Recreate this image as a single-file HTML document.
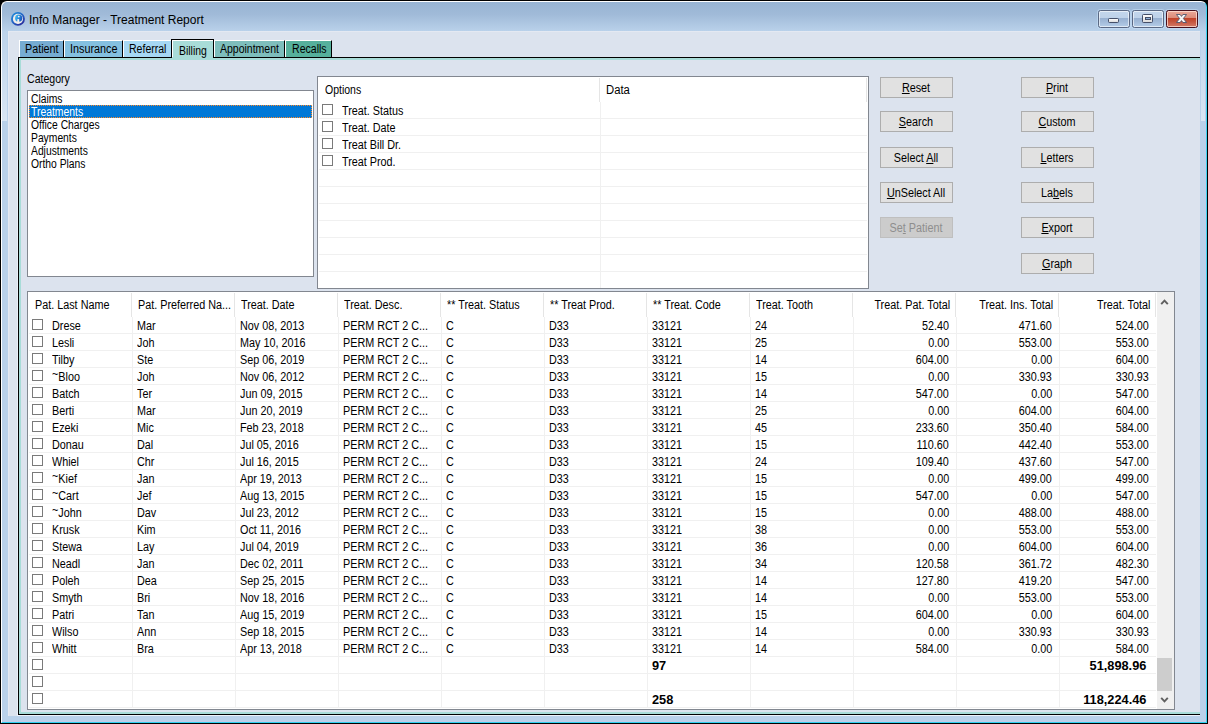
<!DOCTYPE html>
<html><head><meta charset="utf-8"><title>Info Manager - Treatment Report</title>
<style>
html,body{margin:0;padding:0}
body{width:1208px;height:724px;background:#000;overflow:hidden;position:relative;
 font-family:"Liberation Sans",sans-serif;font-size:12px;line-height:13px;color:#000}
div,span,svg{position:absolute;box-sizing:border-box}
.t{white-space:nowrap;transform:scaleX(0.9);transform-origin:0 50%}
.tr{transform-origin:100% 50%}
.tc{transform-origin:50% 50%;text-align:center}
.b{font-weight:bold}
i{font-style:normal;position:relative;top:-3px}
u{text-decoration:underline;text-decoration-thickness:1px;text-underline-offset:1px}
.btn{background:#e1e1e1;border:1px solid #adadad}
.cb{width:11px;height:11px;background:#fff;border:1px solid #7a7a7a}
.hl{background:#f0f0f0;height:1px}
.vl{background:#f0f0f0;width:1px}
.hs{background:#e5e5e5;width:1px}
</style></head><body>

<div id="frame" style="left:1px;top:1px;width:1206px;height:722px;border-radius:6px 6px 0 0;border-left:1px solid #fff;border-top:1px solid #fff;border-right:1px solid #3ed4f2;border-bottom:1px solid #2fd0f0;background:linear-gradient(#98b4d4 0px,#a0bad8 12px,#b9d1ea 29px,#b9d1ea 100%)"></div>
<div style="left:2px;top:31px;width:5px;height:90px;background:linear-gradient(rgba(255,255,255,.04),rgba(255,255,255,.46))"></div>
<div style="left:1201px;top:31px;width:5px;height:90px;background:linear-gradient(rgba(255,255,255,.04),rgba(255,255,255,.46))"></div>
<div style="left:1205px;top:31px;width:1px;height:691px;background:#c2cbe7"></div>
<div style="left:2px;top:721px;width:1204px;height:1px;background:#c2cbe7"></div>
<svg style="left:10px;top:11px" width="16" height="16" viewBox="0 0 16 16">
<defs>
<linearGradient id="g1" x1="0" y1="0" x2="1" y2="0.3"><stop offset="0" stop-color="#58c2f4"/><stop offset="0.5" stop-color="#2a96e0"/><stop offset="1" stop-color="#1c5cc0"/></linearGradient>
<linearGradient id="g2" x1="0.1" y1="0" x2="0.9" y2="1"><stop offset="0" stop-color="#1c90dc"/><stop offset="0.5" stop-color="#2461c4"/><stop offset="1" stop-color="#2a1f94"/></linearGradient>
</defs>
<circle cx="7.95" cy="7.9" r="6.95" fill="url(#g2)"/>
<circle cx="7.95" cy="7.9" r="5.05" fill="#f1ede9"/>
<circle cx="8.65" cy="7.2" r="3.6" fill="url(#g1)"/>
<circle cx="8.75" cy="5.6" r="0.95" fill="#f6f1ee"/>
<rect x="7.3" y="8.1" width="1.9" height="4.4" rx="0.6" fill="#f4efec"/>
</svg>
<span class="t" id="ttl" style="left:29px;top:13px;line-height:14px;transform:scaleX(1);color:#000">Info Manager - Treatment Report</span>
<div style="left:1098px;top:10px;width:32px;height:18px;border:1px solid #5a6883;border-radius:2.5px;background:linear-gradient(#c3d6ec 0,#bed2e9 45%,#98b1d1 46%,#a3bcda 70%,#b5cde8 100%);box-shadow:inset 0 0 0 1px rgba(255,255,255,.58),0 0 0 1px rgba(200,225,250,.55)"></div>
<div style="left:1132px;top:10px;width:32px;height:18px;border:1px solid #5a6883;border-radius:2.5px;background:linear-gradient(#c3d6ec 0,#bed2e9 45%,#98b1d1 46%,#a3bcda 70%,#b5cde8 100%);box-shadow:inset 0 0 0 1px rgba(255,255,255,.58),0 0 0 1px rgba(200,225,250,.55)"></div>
<div style="left:1166px;top:10px;width:32px;height:18px;border:1px solid #47101d;border-radius:2.5px;background:linear-gradient(#eaa898 0,#dc8a78 45%,#c2432a 46%,#c4533c 65%,#d37b69 100%);box-shadow:inset 0 0 0 1px rgba(255,225,215,.75),0 0 0 1px rgba(200,225,250,.55)"></div>
<div style="left:1108px;top:18px;width:11px;height:5px;background:linear-gradient(#fcfcfc,#dcdcdc);border:1px solid #454f68;border-radius:1.5px"></div>
<div style="left:1142px;top:14px;width:11px;height:9px;background:linear-gradient(#fcfcfc,#dcdcdc);border:1px solid #454f68;border-radius:1.5px"></div>
<div style="left:1145px;top:17px;width:6px;height:3px;background:#8fb0d8;border:1px solid #454f68"></div>
<svg style="left:1174px;top:12px" width="16" height="14" viewBox="0 0 16 14">
<path d="M2.5 2.5H6.1L7.5 4.4 8.9 2.5H12.5L9.4 6.5 12.5 10.5H8.9L7.5 8.6 6.1 10.5H2.5L5.6 6.5Z" fill="#f8f6f5" stroke="#46506a" stroke-width="0.85" stroke-linejoin="round"/>
</svg>
<div id="client" style="left:8px;top:31px;width:1192px;height:685px;background:#dce3ee;overflow:hidden;border-top:1px solid #e4e9f2;border-left:1px solid #e4e9f2"></div>
<div style="left:17px;top:57px;width:1183px;height:659px;border-left:1px solid #eaeff9;border-bottom:1px solid #eef2fa"></div>
<div style="left:18px;top:57px;width:1182px;height:658px;border:1px solid #000;border-right:none"></div>
<div style="left:19px;top:58px;width:1181px;height:656px;border:2px solid #a8dcd8;border-right:none"></div>
<div style="left:19px;top:40px;width:45px;height:17px;background:#76acd2;border-left:1px solid #fff;border-top:1px solid #fff;border-right:1px solid #000"></div>
<div style="left:64px;top:40px;width:59px;height:17px;background:#84c0e0;border-left:1px solid #fff;border-top:1px solid #fff;border-right:1px solid #000"></div>
<div style="left:123px;top:40px;width:51px;height:17px;background:#a6d8f4;border-left:1px solid #fff;border-top:1px solid #fff;border-right:1px solid #000"></div>
<div style="left:214px;top:40px;width:71px;height:17px;background:#7ebebc;border-left:1px solid #fff;border-top:1px solid #fff;border-right:1px solid #000"></div>
<div style="left:285px;top:40px;width:47px;height:17px;background:#56b09c;border-left:1px solid #fff;border-top:1px solid #fff;border-right:1px solid #000"></div>
<div style="left:171px;top:39px;width:43px;height:19px;background:#a8dcd8;border:1px solid #000;border-bottom:none;box-shadow:inset 1px 1px 0 #fff"></div>
<div style="left:172px;top:57px;width:41px;height:3px;background:#a8dcd8"></div>
<span class="t" style="top:43px;left:25px;">Patient</span>
<span class="t" style="top:43px;left:70px;">Insurance</span>
<span class="t" style="top:43px;transform:scaleX(0.877);left:129px;">Referral</span>
<span class="t" style="top:45px;transform:scaleX(0.87);left:179px;">Billing</span>
<span class="t" style="top:43px;transform:scaleX(0.875);left:220px;">Appointment</span>
<span class="t" style="top:43px;transform:scaleX(0.88);left:292px;">Recalls</span>
<span class="t" style="top:73px;transform:scaleX(0.88);left:27px;">Category</span>
<div style="left:27px;top:90px;width:287px;height:187px;background:#fff;border:1px solid #828790"></div>
<span class="t" style="top:93px;transform:scaleX(0.86);left:31px;">Claims</span>
<div style="left:29px;top:105px;width:283px;height:13px;background:#0078d7;outline:1px dotted #ff8a28;outline-offset:-1px"></div>
<span class="t" style="top:106px;transform:scaleX(0.865);color:#fff;left:31px;">Treatments</span>
<span class="t" style="top:119px;transform:scaleX(0.86);left:31px;">Office Charges</span>
<span class="t" style="top:132px;transform:scaleX(0.86);left:31px;">Payments</span>
<span class="t" style="top:145px;transform:scaleX(0.86);left:31px;">Adjustments</span>
<span class="t" style="top:158px;transform:scaleX(0.86);left:31px;">Ortho Plans</span>
<div style="left:317px;top:76px;width:552px;height:213px;background:#fff;border:1px solid #828790"></div>
<span class="t" style="top:84px;transform:scaleX(0.875);left:325px;">Options</span>
<span class="t" style="top:84px;transform:scaleX(0.94);left:606px;">Data</span>
<div class="hs" style="left:599px;top:78px;height:24px"></div>
<div class="hs" style="left:866px;top:78px;height:24px"></div>
<div class="vl" style="left:600px;top:102px;height:186px"></div>
<div class="hl" style="left:319px;top:118px;width:548px"></div>
<div class="hl" style="left:319px;top:135px;width:548px"></div>
<div class="hl" style="left:319px;top:152px;width:548px"></div>
<div class="hl" style="left:319px;top:169px;width:548px"></div>
<div class="hl" style="left:319px;top:186px;width:548px"></div>
<div class="hl" style="left:319px;top:203px;width:548px"></div>
<div class="hl" style="left:319px;top:220px;width:548px"></div>
<div class="hl" style="left:319px;top:237px;width:548px"></div>
<div class="hl" style="left:319px;top:254px;width:548px"></div>
<div class="hl" style="left:319px;top:271px;width:548px"></div>
<div class="cb" style="left:322px;top:104px"></div>
<span class="t" style="top:105px;left:342px;">Treat. Status</span>
<div class="cb" style="left:322px;top:121px"></div>
<span class="t" style="top:122px;left:342px;">Treat. Date</span>
<div class="cb" style="left:322px;top:138px"></div>
<span class="t" style="top:139px;left:342px;">Treat Bill Dr.</span>
<div class="cb" style="left:322px;top:155px"></div>
<span class="t" style="top:156px;left:342px;">Treat Prod.</span>
<div class="btn" style="left:880px;top:77px;width:73px;height:21px"></div>
<span class="t tc" style="top:82px;left:765.5px;width:300px;"><u>R</u>eset</span>
<div class="btn" style="left:880px;top:111px;width:73px;height:21px"></div>
<span class="t tc" style="top:116px;left:765.5px;width:300px;"><u>S</u>earch</span>
<div class="btn" style="left:880px;top:147px;width:73px;height:21px"></div>
<span class="t tc" style="top:152px;left:765.5px;width:300px;">Select <u>A</u>ll</span>
<div class="btn" style="left:880px;top:182px;width:73px;height:21px"></div>
<span class="t tc" style="top:187px;left:765.5px;width:300px;"><u>U</u>nSelect All</span>
<div class="btn" style="left:880px;top:217px;width:73px;height:21px;background:#cccccc;border-color:#bfbfbf"></div>
<span class="t tc" style="top:222px;color:#8e8e8e;left:765.5px;width:300px;">Se<u>t</u> Patient</span>
<div class="btn" style="left:1021px;top:77px;width:73px;height:21px"></div>
<span class="t tc" style="top:82px;left:906.5px;width:300px;"><u>P</u>rint</span>
<div class="btn" style="left:1021px;top:111px;width:73px;height:21px"></div>
<span class="t tc" style="top:116px;left:906.5px;width:300px;"><u>C</u>ustom</span>
<div class="btn" style="left:1021px;top:147px;width:73px;height:21px"></div>
<span class="t tc" style="top:152px;left:906.5px;width:300px;"><u>L</u>etters</span>
<div class="btn" style="left:1021px;top:182px;width:73px;height:21px"></div>
<span class="t tc" style="top:187px;left:906.5px;width:300px;">La<u>b</u>els</span>
<div class="btn" style="left:1021px;top:217px;width:73px;height:21px"></div>
<span class="t tc" style="top:222px;left:906.5px;width:300px;"><u>E</u>xport</span>
<div class="btn" style="left:1021px;top:253px;width:73px;height:21px"></div>
<span class="t tc" style="top:258px;left:906.5px;width:300px;"><u>G</u>raph</span>
<div style="left:27px;top:291px;width:1148px;height:419px;background:#fff;border:1px solid #828790"></div>
<div style="left:1157px;top:292px;width:17px;height:417px;background:#f0f0f0"></div>
<div style="left:1157px;top:658px;width:15px;height:33px;background:#cdcdcd"></div>
<svg style="left:1160px;top:298px" width="9" height="8" viewBox="0 0 9 8"><path d="M1.2 6.2L4.5 2.6 7.8 6.2" fill="none" stroke="#606060" stroke-width="1.9"/></svg>
<svg style="left:1160px;top:696px" width="9" height="8" viewBox="0 0 9 8"><path d="M1.2 1.8L4.5 5.4 7.8 1.8" fill="none" stroke="#606060" stroke-width="1.9"/></svg>
<div class="hs" style="left:131px;top:293px;height:24px"></div>
<div class="vl" style="left:132px;top:317px;height:391px"></div>
<div class="hs" style="left:234px;top:293px;height:24px"></div>
<div class="vl" style="left:235px;top:317px;height:391px"></div>
<div class="hs" style="left:337px;top:293px;height:24px"></div>
<div class="vl" style="left:338px;top:317px;height:391px"></div>
<div class="hs" style="left:440px;top:293px;height:24px"></div>
<div class="vl" style="left:441px;top:317px;height:391px"></div>
<div class="hs" style="left:543px;top:293px;height:24px"></div>
<div class="vl" style="left:544px;top:317px;height:391px"></div>
<div class="hs" style="left:646px;top:293px;height:24px"></div>
<div class="vl" style="left:647px;top:317px;height:391px"></div>
<div class="hs" style="left:749px;top:293px;height:24px"></div>
<div class="vl" style="left:750px;top:317px;height:391px"></div>
<div class="hs" style="left:852px;top:293px;height:24px"></div>
<div class="vl" style="left:853px;top:317px;height:391px"></div>
<div class="hs" style="left:955px;top:293px;height:24px"></div>
<div class="vl" style="left:956px;top:317px;height:391px"></div>
<div class="hs" style="left:1058px;top:293px;height:24px"></div>
<div class="vl" style="left:1059px;top:317px;height:391px"></div>
<div class="hs" style="left:1155px;top:293px;height:24px"></div>
<div class="hl" style="left:29px;top:333px;width:1127px"></div>
<div class="hl" style="left:29px;top:350px;width:1127px"></div>
<div class="hl" style="left:29px;top:367px;width:1127px"></div>
<div class="hl" style="left:29px;top:384px;width:1127px"></div>
<div class="hl" style="left:29px;top:401px;width:1127px"></div>
<div class="hl" style="left:29px;top:418px;width:1127px"></div>
<div class="hl" style="left:29px;top:435px;width:1127px"></div>
<div class="hl" style="left:29px;top:452px;width:1127px"></div>
<div class="hl" style="left:29px;top:469px;width:1127px"></div>
<div class="hl" style="left:29px;top:486px;width:1127px"></div>
<div class="hl" style="left:29px;top:503px;width:1127px"></div>
<div class="hl" style="left:29px;top:520px;width:1127px"></div>
<div class="hl" style="left:29px;top:537px;width:1127px"></div>
<div class="hl" style="left:29px;top:554px;width:1127px"></div>
<div class="hl" style="left:29px;top:571px;width:1127px"></div>
<div class="hl" style="left:29px;top:588px;width:1127px"></div>
<div class="hl" style="left:29px;top:605px;width:1127px"></div>
<div class="hl" style="left:29px;top:622px;width:1127px"></div>
<div class="hl" style="left:29px;top:639px;width:1127px"></div>
<div class="hl" style="left:29px;top:656px;width:1127px"></div>
<div class="hl" style="left:29px;top:673px;width:1127px"></div>
<div class="hl" style="left:29px;top:690px;width:1127px"></div>
<div class="hl" style="left:29px;top:707px;width:1127px"></div>
<span class="t" style="top:299px;left:35px;">Pat. Last Name</span>
<span class="t" style="top:299px;left:138px;">Pat. Preferred Na...</span>
<span class="t" style="top:299px;left:241px;">Treat. Date</span>
<span class="t" style="top:299px;left:344px;">Treat. Desc.</span>
<span class="t" style="top:299px;left:447px;">** Treat. Status</span>
<span class="t" style="top:299px;left:550px;">** Treat Prod.</span>
<span class="t" style="top:299px;left:653px;">** Treat. Code</span>
<span class="t" style="top:299px;left:756px;">Treat. Tooth</span>
<span class="t tr" style="top:299px;right:258px;">Treat. Pat. Total</span>
<span class="t tr" style="top:299px;right:155px;">Treat. Ins. Total</span>
<span class="t tr" style="top:299px;right:58px;">Treat. Total</span>
<div class="cb" style="left:32px;top:319px"></div>
<span class="t" style="top:320px;left:52px;">Drese</span>
<span class="t" style="top:320px;left:137px;">Mar</span>
<span class="t" style="top:320px;left:240px;">Nov 08, 2013</span>
<span class="t" style="top:320px;left:343px;">PERM RCT 2 C...</span>
<span class="t" style="top:320px;left:446px;">C</span>
<span class="t" style="top:320px;left:549px;">D33</span>
<span class="t" style="top:320px;left:652px;">33121</span>
<span class="t" style="top:320px;left:755px;">24</span>
<span class="t tr" style="top:320px;right:259px;">52.40</span>
<span class="t tr" style="top:320px;right:156px;">471.60</span>
<span class="t tr" style="top:320px;right:59px;">524.00</span>
<div class="cb" style="left:32px;top:336px"></div>
<span class="t" style="top:337px;left:52px;">Lesli</span>
<span class="t" style="top:337px;left:137px;">Joh</span>
<span class="t" style="top:337px;left:240px;">May 10, 2016</span>
<span class="t" style="top:337px;left:343px;">PERM RCT 2 C...</span>
<span class="t" style="top:337px;left:446px;">C</span>
<span class="t" style="top:337px;left:549px;">D33</span>
<span class="t" style="top:337px;left:652px;">33121</span>
<span class="t" style="top:337px;left:755px;">25</span>
<span class="t tr" style="top:337px;right:259px;">0.00</span>
<span class="t tr" style="top:337px;right:156px;">553.00</span>
<span class="t tr" style="top:337px;right:59px;">553.00</span>
<div class="cb" style="left:32px;top:353px"></div>
<span class="t" style="top:354px;left:52px;">Tilby</span>
<span class="t" style="top:354px;left:137px;">Ste</span>
<span class="t" style="top:354px;left:240px;">Sep 06, 2019</span>
<span class="t" style="top:354px;left:343px;">PERM RCT 2 C...</span>
<span class="t" style="top:354px;left:446px;">C</span>
<span class="t" style="top:354px;left:549px;">D33</span>
<span class="t" style="top:354px;left:652px;">33121</span>
<span class="t" style="top:354px;left:755px;">14</span>
<span class="t tr" style="top:354px;right:259px;">604.00</span>
<span class="t tr" style="top:354px;right:156px;">0.00</span>
<span class="t tr" style="top:354px;right:59px;">604.00</span>
<div class="cb" style="left:32px;top:370px"></div>
<span class="t" style="top:371px;left:52px;"><i>~</i>Bloo</span>
<span class="t" style="top:371px;left:137px;">Joh</span>
<span class="t" style="top:371px;left:240px;">Nov 06, 2012</span>
<span class="t" style="top:371px;left:343px;">PERM RCT 2 C...</span>
<span class="t" style="top:371px;left:446px;">C</span>
<span class="t" style="top:371px;left:549px;">D33</span>
<span class="t" style="top:371px;left:652px;">33121</span>
<span class="t" style="top:371px;left:755px;">15</span>
<span class="t tr" style="top:371px;right:259px;">0.00</span>
<span class="t tr" style="top:371px;right:156px;">330.93</span>
<span class="t tr" style="top:371px;right:59px;">330.93</span>
<div class="cb" style="left:32px;top:387px"></div>
<span class="t" style="top:388px;left:52px;">Batch</span>
<span class="t" style="top:388px;left:137px;">Ter</span>
<span class="t" style="top:388px;left:240px;">Jun 09, 2015</span>
<span class="t" style="top:388px;left:343px;">PERM RCT 2 C...</span>
<span class="t" style="top:388px;left:446px;">C</span>
<span class="t" style="top:388px;left:549px;">D33</span>
<span class="t" style="top:388px;left:652px;">33121</span>
<span class="t" style="top:388px;left:755px;">14</span>
<span class="t tr" style="top:388px;right:259px;">547.00</span>
<span class="t tr" style="top:388px;right:156px;">0.00</span>
<span class="t tr" style="top:388px;right:59px;">547.00</span>
<div class="cb" style="left:32px;top:404px"></div>
<span class="t" style="top:405px;left:52px;">Berti</span>
<span class="t" style="top:405px;left:137px;">Mar</span>
<span class="t" style="top:405px;left:240px;">Jun 20, 2019</span>
<span class="t" style="top:405px;left:343px;">PERM RCT 2 C...</span>
<span class="t" style="top:405px;left:446px;">C</span>
<span class="t" style="top:405px;left:549px;">D33</span>
<span class="t" style="top:405px;left:652px;">33121</span>
<span class="t" style="top:405px;left:755px;">25</span>
<span class="t tr" style="top:405px;right:259px;">0.00</span>
<span class="t tr" style="top:405px;right:156px;">604.00</span>
<span class="t tr" style="top:405px;right:59px;">604.00</span>
<div class="cb" style="left:32px;top:421px"></div>
<span class="t" style="top:422px;left:52px;">Ezeki</span>
<span class="t" style="top:422px;left:137px;">Mic</span>
<span class="t" style="top:422px;left:240px;">Feb 23, 2018</span>
<span class="t" style="top:422px;left:343px;">PERM RCT 2 C...</span>
<span class="t" style="top:422px;left:446px;">C</span>
<span class="t" style="top:422px;left:549px;">D33</span>
<span class="t" style="top:422px;left:652px;">33121</span>
<span class="t" style="top:422px;left:755px;">45</span>
<span class="t tr" style="top:422px;right:259px;">233.60</span>
<span class="t tr" style="top:422px;right:156px;">350.40</span>
<span class="t tr" style="top:422px;right:59px;">584.00</span>
<div class="cb" style="left:32px;top:438px"></div>
<span class="t" style="top:439px;left:52px;">Donau</span>
<span class="t" style="top:439px;left:137px;">Dal</span>
<span class="t" style="top:439px;left:240px;">Jul 05, 2016</span>
<span class="t" style="top:439px;left:343px;">PERM RCT 2 C...</span>
<span class="t" style="top:439px;left:446px;">C</span>
<span class="t" style="top:439px;left:549px;">D33</span>
<span class="t" style="top:439px;left:652px;">33121</span>
<span class="t" style="top:439px;left:755px;">15</span>
<span class="t tr" style="top:439px;right:259px;">110.60</span>
<span class="t tr" style="top:439px;right:156px;">442.40</span>
<span class="t tr" style="top:439px;right:59px;">553.00</span>
<div class="cb" style="left:32px;top:455px"></div>
<span class="t" style="top:456px;left:52px;">Whiel</span>
<span class="t" style="top:456px;left:137px;">Chr</span>
<span class="t" style="top:456px;left:240px;">Jul 16, 2015</span>
<span class="t" style="top:456px;left:343px;">PERM RCT 2 C...</span>
<span class="t" style="top:456px;left:446px;">C</span>
<span class="t" style="top:456px;left:549px;">D33</span>
<span class="t" style="top:456px;left:652px;">33121</span>
<span class="t" style="top:456px;left:755px;">24</span>
<span class="t tr" style="top:456px;right:259px;">109.40</span>
<span class="t tr" style="top:456px;right:156px;">437.60</span>
<span class="t tr" style="top:456px;right:59px;">547.00</span>
<div class="cb" style="left:32px;top:472px"></div>
<span class="t" style="top:473px;left:52px;"><i>~</i>Kief</span>
<span class="t" style="top:473px;left:137px;">Jan</span>
<span class="t" style="top:473px;left:240px;">Apr 19, 2013</span>
<span class="t" style="top:473px;left:343px;">PERM RCT 2 C...</span>
<span class="t" style="top:473px;left:446px;">C</span>
<span class="t" style="top:473px;left:549px;">D33</span>
<span class="t" style="top:473px;left:652px;">33121</span>
<span class="t" style="top:473px;left:755px;">15</span>
<span class="t tr" style="top:473px;right:259px;">0.00</span>
<span class="t tr" style="top:473px;right:156px;">499.00</span>
<span class="t tr" style="top:473px;right:59px;">499.00</span>
<div class="cb" style="left:32px;top:489px"></div>
<span class="t" style="top:490px;left:52px;"><i>~</i>Cart</span>
<span class="t" style="top:490px;left:137px;">Jef</span>
<span class="t" style="top:490px;left:240px;">Aug 13, 2015</span>
<span class="t" style="top:490px;left:343px;">PERM RCT 2 C...</span>
<span class="t" style="top:490px;left:446px;">C</span>
<span class="t" style="top:490px;left:549px;">D33</span>
<span class="t" style="top:490px;left:652px;">33121</span>
<span class="t" style="top:490px;left:755px;">15</span>
<span class="t tr" style="top:490px;right:259px;">547.00</span>
<span class="t tr" style="top:490px;right:156px;">0.00</span>
<span class="t tr" style="top:490px;right:59px;">547.00</span>
<div class="cb" style="left:32px;top:506px"></div>
<span class="t" style="top:507px;left:52px;"><i>~</i>John</span>
<span class="t" style="top:507px;left:137px;">Dav</span>
<span class="t" style="top:507px;left:240px;">Jul 23, 2012</span>
<span class="t" style="top:507px;left:343px;">PERM RCT 2 C...</span>
<span class="t" style="top:507px;left:446px;">C</span>
<span class="t" style="top:507px;left:549px;">D33</span>
<span class="t" style="top:507px;left:652px;">33121</span>
<span class="t" style="top:507px;left:755px;">15</span>
<span class="t tr" style="top:507px;right:259px;">0.00</span>
<span class="t tr" style="top:507px;right:156px;">488.00</span>
<span class="t tr" style="top:507px;right:59px;">488.00</span>
<div class="cb" style="left:32px;top:523px"></div>
<span class="t" style="top:524px;left:52px;">Krusk</span>
<span class="t" style="top:524px;left:137px;">Kim</span>
<span class="t" style="top:524px;left:240px;">Oct 11, 2016</span>
<span class="t" style="top:524px;left:343px;">PERM RCT 2 C...</span>
<span class="t" style="top:524px;left:446px;">C</span>
<span class="t" style="top:524px;left:549px;">D33</span>
<span class="t" style="top:524px;left:652px;">33121</span>
<span class="t" style="top:524px;left:755px;">38</span>
<span class="t tr" style="top:524px;right:259px;">0.00</span>
<span class="t tr" style="top:524px;right:156px;">553.00</span>
<span class="t tr" style="top:524px;right:59px;">553.00</span>
<div class="cb" style="left:32px;top:540px"></div>
<span class="t" style="top:541px;left:52px;">Stewa</span>
<span class="t" style="top:541px;left:137px;">Lay</span>
<span class="t" style="top:541px;left:240px;">Jul 04, 2019</span>
<span class="t" style="top:541px;left:343px;">PERM RCT 2 C...</span>
<span class="t" style="top:541px;left:446px;">C</span>
<span class="t" style="top:541px;left:549px;">D33</span>
<span class="t" style="top:541px;left:652px;">33121</span>
<span class="t" style="top:541px;left:755px;">36</span>
<span class="t tr" style="top:541px;right:259px;">0.00</span>
<span class="t tr" style="top:541px;right:156px;">604.00</span>
<span class="t tr" style="top:541px;right:59px;">604.00</span>
<div class="cb" style="left:32px;top:557px"></div>
<span class="t" style="top:558px;left:52px;">Neadl</span>
<span class="t" style="top:558px;left:137px;">Jan</span>
<span class="t" style="top:558px;left:240px;">Dec 02, 2011</span>
<span class="t" style="top:558px;left:343px;">PERM RCT 2 C...</span>
<span class="t" style="top:558px;left:446px;">C</span>
<span class="t" style="top:558px;left:549px;">D33</span>
<span class="t" style="top:558px;left:652px;">33121</span>
<span class="t" style="top:558px;left:755px;">34</span>
<span class="t tr" style="top:558px;right:259px;">120.58</span>
<span class="t tr" style="top:558px;right:156px;">361.72</span>
<span class="t tr" style="top:558px;right:59px;">482.30</span>
<div class="cb" style="left:32px;top:574px"></div>
<span class="t" style="top:575px;left:52px;">Poleh</span>
<span class="t" style="top:575px;left:137px;">Dea</span>
<span class="t" style="top:575px;left:240px;">Sep 25, 2015</span>
<span class="t" style="top:575px;left:343px;">PERM RCT 2 C...</span>
<span class="t" style="top:575px;left:446px;">C</span>
<span class="t" style="top:575px;left:549px;">D33</span>
<span class="t" style="top:575px;left:652px;">33121</span>
<span class="t" style="top:575px;left:755px;">14</span>
<span class="t tr" style="top:575px;right:259px;">127.80</span>
<span class="t tr" style="top:575px;right:156px;">419.20</span>
<span class="t tr" style="top:575px;right:59px;">547.00</span>
<div class="cb" style="left:32px;top:591px"></div>
<span class="t" style="top:592px;left:52px;">Smyth</span>
<span class="t" style="top:592px;left:137px;">Bri</span>
<span class="t" style="top:592px;left:240px;">Nov 18, 2016</span>
<span class="t" style="top:592px;left:343px;">PERM RCT 2 C...</span>
<span class="t" style="top:592px;left:446px;">C</span>
<span class="t" style="top:592px;left:549px;">D33</span>
<span class="t" style="top:592px;left:652px;">33121</span>
<span class="t" style="top:592px;left:755px;">14</span>
<span class="t tr" style="top:592px;right:259px;">0.00</span>
<span class="t tr" style="top:592px;right:156px;">553.00</span>
<span class="t tr" style="top:592px;right:59px;">553.00</span>
<div class="cb" style="left:32px;top:608px"></div>
<span class="t" style="top:609px;left:52px;">Patri</span>
<span class="t" style="top:609px;left:137px;">Tan</span>
<span class="t" style="top:609px;left:240px;">Aug 15, 2019</span>
<span class="t" style="top:609px;left:343px;">PERM RCT 2 C...</span>
<span class="t" style="top:609px;left:446px;">C</span>
<span class="t" style="top:609px;left:549px;">D33</span>
<span class="t" style="top:609px;left:652px;">33121</span>
<span class="t" style="top:609px;left:755px;">15</span>
<span class="t tr" style="top:609px;right:259px;">604.00</span>
<span class="t tr" style="top:609px;right:156px;">0.00</span>
<span class="t tr" style="top:609px;right:59px;">604.00</span>
<div class="cb" style="left:32px;top:625px"></div>
<span class="t" style="top:626px;left:52px;">Wilso</span>
<span class="t" style="top:626px;left:137px;">Ann</span>
<span class="t" style="top:626px;left:240px;">Sep 18, 2015</span>
<span class="t" style="top:626px;left:343px;">PERM RCT 2 C...</span>
<span class="t" style="top:626px;left:446px;">C</span>
<span class="t" style="top:626px;left:549px;">D33</span>
<span class="t" style="top:626px;left:652px;">33121</span>
<span class="t" style="top:626px;left:755px;">14</span>
<span class="t tr" style="top:626px;right:259px;">0.00</span>
<span class="t tr" style="top:626px;right:156px;">330.93</span>
<span class="t tr" style="top:626px;right:59px;">330.93</span>
<div class="cb" style="left:32px;top:642px"></div>
<span class="t" style="top:643px;left:52px;">Whitt</span>
<span class="t" style="top:643px;left:137px;">Bra</span>
<span class="t" style="top:643px;left:240px;">Apr 13, 2018</span>
<span class="t" style="top:643px;left:343px;">PERM RCT 2 C...</span>
<span class="t" style="top:643px;left:446px;">C</span>
<span class="t" style="top:643px;left:549px;">D33</span>
<span class="t" style="top:643px;left:652px;">33121</span>
<span class="t" style="top:643px;left:755px;">14</span>
<span class="t tr" style="top:643px;right:259px;">584.00</span>
<span class="t tr" style="top:643px;right:156px;">0.00</span>
<span class="t tr" style="top:643px;right:59px;">584.00</span>
<div class="cb" style="left:32px;top:659px"></div>
<span class="t b" style="top:660px;transform:scaleX(1.065);left:652px;">97</span>
<span class="t tr b" style="top:660px;transform:scaleX(1.065);right:62px;">51,898.96</span>
<div class="cb" style="left:32px;top:676px"></div>
<div class="cb" style="left:32px;top:693px"></div>
<span class="t b" style="top:694px;transform:scaleX(1.065);left:652px;">258</span>
<span class="t tr b" style="top:694px;transform:scaleX(1.065);right:62px;">118,224.46</span>
</body></html>
